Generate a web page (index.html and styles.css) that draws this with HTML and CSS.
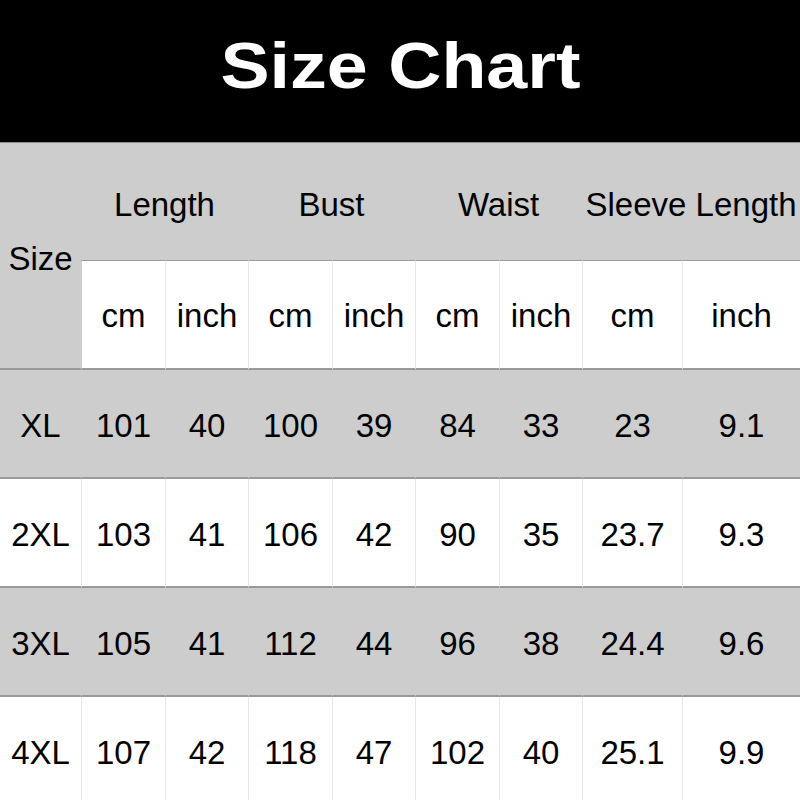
FILE: index.html
```html
<!DOCTYPE html>
<html>
<head>
<meta charset="utf-8">
<link rel="stylesheet" href="styles.css">
</head>
<body>
<div class="page">
  <header class="title-bar"><h1 class="title">Size Chart</h1></header>
  <table class="chart">
    <colgroup>
      <col class="c-size"><col class="c-a"><col class="c-b"><col class="c-a"><col class="c-b"><col class="c-a"><col class="c-b"><col class="c-sc"><col class="c-si">
    </colgroup>
    <thead>
      <tr class="h1">
        <th class="size-head" rowspan="2">Size</th>
        <th colspan="2">Length</th>
        <th colspan="2">Bust</th>
        <th colspan="2">Waist</th>
        <th colspan="2">Sleeve Length</th>
      </tr>
      <tr class="h2">
        <th>cm</th><th>inch</th><th>cm</th><th>inch</th><th>cm</th><th>inch</th><th>cm</th><th>inch</th>
      </tr>
    </thead>
    <tbody>
      <tr class="row grey"><td>XL</td><td>101</td><td>40</td><td>100</td><td>39</td><td>84</td><td>33</td><td>23</td><td>9.1</td></tr>
      <tr class="row white"><td>2XL</td><td>103</td><td>41</td><td>106</td><td>42</td><td>90</td><td>35</td><td>23.7</td><td>9.3</td></tr>
      <tr class="row grey"><td>3XL</td><td>105</td><td>41</td><td>112</td><td>44</td><td>96</td><td>38</td><td>24.4</td><td>9.6</td></tr>
      <tr class="row white"><td>4XL</td><td>107</td><td>42</td><td>118</td><td>47</td><td>102</td><td>40</td><td>25.1</td><td>9.9</td></tr>
    </tbody>
  </table>
</div>
</body>
</html>
```

FILE: styles.css
```css
html, body {
  margin: 0;
  padding: 0;
  background: #ffffff;
}
.page {
  width: 800px;
  height: 800px;
  overflow: hidden;
  font-family: "Liberation Sans", Arial, sans-serif;
  color: #000;
}
.title-bar {
  height: 143px;
  box-sizing: border-box;
  background: #000;
  border-bottom: 1px solid #8a8a8a;
  display: flex;
  align-items: center;
  justify-content: center;
  padding-bottom: 10px;
}
.title {
  margin: 0;
  color: #fff;
  font-size: 64px;
  font-weight: bold;
  transform: scaleX(1.15);
}
.chart {
  width: 800px;
  table-layout: fixed;
  border-collapse: separate;
  border-spacing: 0;
  font-size: 33px;
}
.c-size { width: 81px; }
.c-a { width: 84px; }
.c-b { width: 83px; }
.c-sc { width: 100px; }
.c-si { width: 118px; }
.chart th, .chart td {
  box-sizing: border-box;
  padding: 0;
  text-align: center;
  vertical-align: middle;
  font-weight: normal;
  white-space: nowrap;
  overflow: visible;
}
.h1 th {
  height: 117px;
  background: #cdcdcd;
  padding-top: 6px;
}
.size-head {
  background: #cdcdcd;
  border-bottom: 2px solid #9a9a9a;
}
.h2 th {
  height: 110px;
  background: #fff;
  border-top: 1px solid #9a9a9a;
  border-left: 1px solid #e8e8e8;
  border-bottom: 2px solid #9a9a9a;
  padding-top: 2px;
}
.h2 th:first-child {
  border-left: 1px solid #cdcdcd;
}
.row td {
  height: 109px;
  border-bottom: 2px solid #9a9a9a;
  border-left: 1px solid #e8e8e8;
  padding-top: 4px;
}
.row td:first-child {
  border-left: none;
}
.row.grey td {
  background: #cdcdcd;
  border-left-color: #cdcdcd;
}
.row.white td {
  background: #fff;
}
```
